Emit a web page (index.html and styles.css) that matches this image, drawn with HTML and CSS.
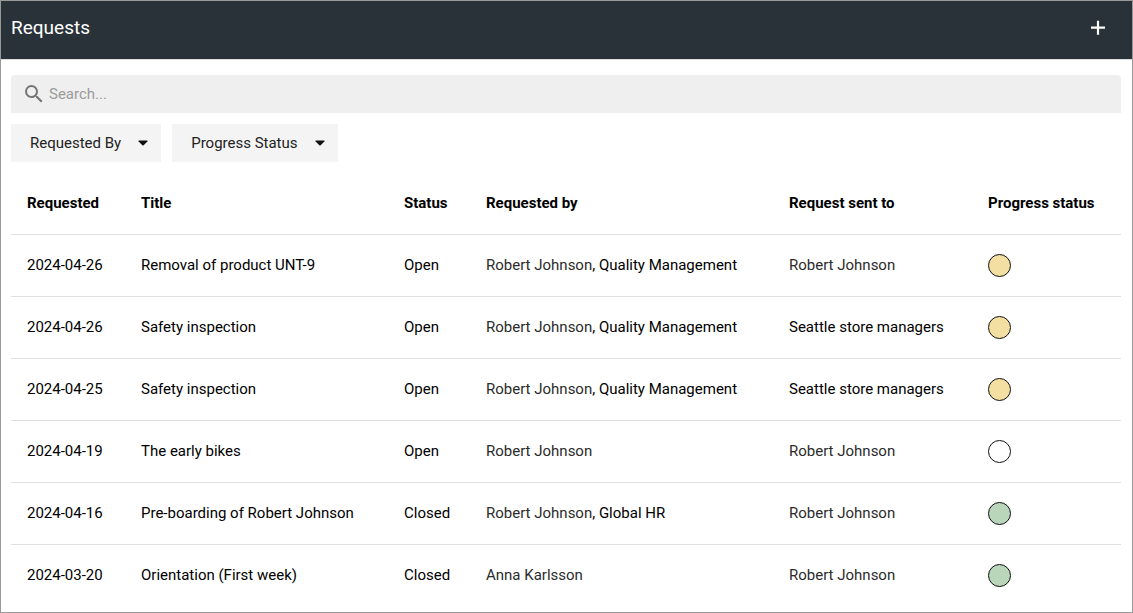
FILE: index.html
```html
<!DOCTYPE html>
<html lang="en">
<head>
<meta charset="utf-8">
<title>Requests</title>
<link rel="stylesheet" href="styles.css">
</head>
<body>
<div class="panel">
  <header class="header">
    <h1 class="title">Requests</h1>
    <button class="add" type="button" aria-label="Add request">
      <svg viewBox="0 0 24 24" width="24" height="24"><path d="M19 12.7h-5.9v6.1h-2.2v-6.1H5v-2.2h5.9V4.8h2.2v5.7H19z"/></svg>
    </button>
  </header>
  <main class="content">
    <label class="search">
      <svg class="search-icon" viewBox="0 0 24 24" width="24" height="24"><path d="M15.5 14h-.79l-.28-.27A6.471 6.471 0 0 0 16 9.5 6.5 6.5 0 1 0 9.5 16c1.61 0 3.09-.59 4.23-1.57l.27.28v.79l5 4.99L20.49 19l-4.99-5zm-6 0C7.01 14 5 11.99 5 9.5S7.01 5 9.5 5 14 7.01 14 9.5 11.99 14 9.5 14z"/></svg>
      <input class="search-input" type="text" placeholder="Search..." aria-label="Search">
    </label>
    <div class="filters">
      <button class="filter" type="button">Requested By <svg class="caret" viewBox="0 0 10 6" width="10" height="6"><path d="M.8.5h8.4q.6.4.2 1L5.6 5.2q-.6.5-1.2 0L.6 1.5Q.2.9.8.5z"/></svg></button>
      <button class="filter" type="button">Progress Status <svg class="caret" viewBox="0 0 10 6" width="10" height="6"><path d="M.8.5h8.4q.6.4.2 1L5.6 5.2q-.6.5-1.2 0L.6 1.5Q.2.9.8.5z"/></svg></button>
    </div>
    <table class="table">
      <colgroup><col class="c-date"><col class="c-title"><col class="c-status"><col class="c-by"><col class="c-to"><col class="c-progress"></colgroup>
      <thead>
        <tr><th>Requested</th><th>Title</th><th>Status</th><th>Requested by</th><th>Request sent to</th><th>Progress status</th></tr>
      </thead>
      <tbody>
        <tr><td>2024-04-26</td><td>Removal of product UNT-9</td><td>Open</td><td><span class="person">Robert Johnson</span>, Quality Management</td><td><span class="person">Robert Johnson</span></td><td><span class="dot yellow"></span></td></tr>
        <tr><td>2024-04-26</td><td>Safety inspection</td><td>Open</td><td><span class="person">Robert Johnson</span>, Quality Management</td><td>Seattle store managers</td><td><span class="dot yellow"></span></td></tr>
        <tr><td>2024-04-25</td><td>Safety inspection</td><td>Open</td><td><span class="person">Robert Johnson</span>, Quality Management</td><td>Seattle store managers</td><td><span class="dot yellow"></span></td></tr>
        <tr><td>2024-04-19</td><td>The early bikes</td><td>Open</td><td><span class="person">Robert Johnson</span></td><td><span class="person">Robert Johnson</span></td><td><span class="dot"></span></td></tr>
        <tr><td>2024-04-16</td><td>Pre-boarding of Robert Johnson</td><td>Closed</td><td><span class="person">Robert Johnson</span>, Global HR</td><td><span class="person">Robert Johnson</span></td><td><span class="dot green"></span></td></tr>
        <tr><td>2024-03-20</td><td>Orientation (First week)</td><td>Closed</td><td><span class="person">Anna Karlsson</span></td><td><span class="person">Robert Johnson</span></td><td><span class="dot green"></span></td></tr>
      </tbody>
    </table>
  </main>
</div>
</body>
</html>
```
FILE: styles.css
```css
* { box-sizing: border-box; }
body { margin: 0; font-family: Roboto, "Liberation Sans", sans-serif; font-size: 15px; color: #000; background: #fff; }
.panel { min-height: 100vh; border: 1px solid #999; overflow: hidden; }
.header { display: flex; align-items: center; justify-content: space-between; height: 59px; padding: 0 22px 4px 10px; border-bottom: 1px solid #dcdedf; background: #293238; color: #fff; }
.title { margin: 0; font-size: 19px; font-weight: 400; line-height: 24px; }
.add { display: flex; padding: 0; border: 0; background: none; }
.add svg { fill: #fff; }
.content { padding: 15px 11px 0 10px; }
.search { display: flex; align-items: center; height: 38px; padding: 0 11px; background: #efefef; border-radius: 4px 4px 0 0; }
.search-icon { fill: #757575; }
.search-input { flex: 1; min-width: 0; margin: 0; padding: 0 3px; border: 0; outline: 0; background: none; font: inherit; }
.search-input::placeholder { color: #9b9b9b; }
.filters { display: flex; gap: 11px; margin-top: 11px; }
.filter { display: flex; align-items: center; gap: 17px; height: 38px; padding: 0 13px 0 19px; border: 0; background: #f4f4f4; font: inherit; color: #222; }
.caret { fill: #111; }
.table { width: 100%; margin-top: 11px; border-collapse: collapse; table-layout: fixed; }
.c-date { width: 114px; }
.c-title { width: 263px; }
.c-status { width: 82px; }
.c-by { width: 303px; }
.c-to { width: 199px; }
.table th, .table td { height: 62px; padding: 0 0 0 16px; text-align: left; white-space: nowrap; line-height: 20px; }
.table th { height: 61px; font-weight: 700; }
.table tbody tr { border-top: 1px solid #e0e0e0; }
.person { color: #2b2b2b; }
.dot { display: block; width: 23px; height: 23px; border: 1px solid #111; border-radius: 50%; background: #fff; }
.yellow { background: #f3dfa2; }
.green { background: #b9d6bb; }
```
